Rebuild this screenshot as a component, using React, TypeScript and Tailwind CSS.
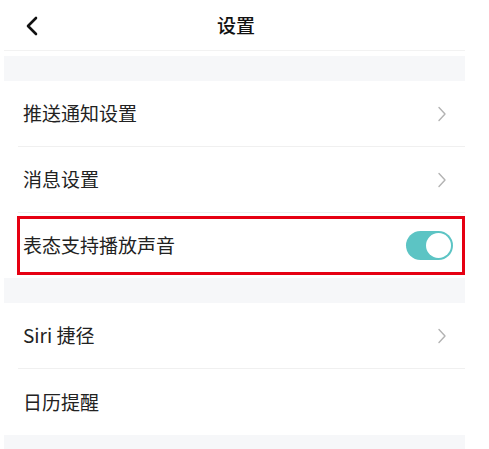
import React from "react";

const font = { fontFamily: '"Noto Sans CJK SC", "Noto Sans", sans-serif' };

function Chevron() {
  return (
    <svg width="10" height="16" viewBox="0 0 10 16" fill="none">
      <path d="M2 1.5 L8 8 L2 14.5" stroke="#b3b3b3" strokeWidth="1.4" strokeLinecap="round" strokeLinejoin="round" />
    </svg>
  );
}

function Toggle() {
  return (
    <div className="flex h-[29px] w-[47px] items-center justify-end rounded-full bg-[#5cc4c4] px-[2px]">
      <div className="h-[25px] w-[25px] rounded-full bg-white" />
    </div>
  );
}

function Row({ label, right, last }: { label: string; right: React.ReactNode; last?: boolean }) {
  return (
    <div className="flex h-[66px] flex-col">
      <div className="flex flex-1 items-center justify-between pl-[19px] pr-[18px]">
        <span className="text-[19px] text-[#222]">{label}</span>
        {right}
      </div>
      {!last && <div className="ml-[14px] h-px bg-[#f0f0f0]" />}
    </div>
  );
}

export default function App() {
  return (
    <div className="h-[449px] w-[489px] overflow-hidden bg-white" style={font}>
      <div className="ml-[4px] w-[461px]">
        {/* header */}
        <div className="relative flex h-[51px] items-center justify-center border-b border-[#f2f2f2]">
          <svg className="absolute left-[21px] top-[16px]" width="14" height="20" viewBox="0 0 14 20" fill="none">
            <path d="M11 2 L3 10 L11 18" stroke="#111" strokeWidth="2.6" strokeLinecap="round" strokeLinejoin="round" />
          </svg>
          <span className="ml-[3px] text-[19px] font-medium text-[#111]">设置</span>
        </div>
        <div className="h-[5px]" />
        <div className="h-[25px] bg-[#f6f7f9]" />

        <Row label="推送通知设置" right={<Chevron />} />
        <Row label="消息设置" right={<Chevron />} />
        <div className="flex h-[65px] items-center">
          <div className="ml-[13px] flex h-[59px] flex-1 items-center justify-between border-[3px] border-[#e60012] pl-[3px] pr-[9px]">
            <span className="text-[19px] text-[#222]">表态支持播放声音</span>
            <Toggle />
          </div>
        </div>
        <div className="h-[25px] bg-[#f6f7f9]" />

        <Row label="Siri 捷径" right={<Chevron />} />
        <Row label="日历提醒" right={<span />} last />
        <div className="h-[20px] bg-[#f6f7f9]" />
      </div>
    </div>
  );
}
